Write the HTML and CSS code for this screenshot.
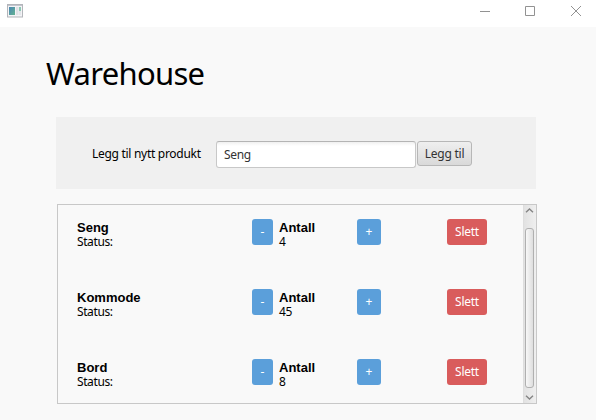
FILE: index.html
```html
<!DOCTYPE html>
<html lang="no">
<head>
<meta charset="utf-8">
<title>Warehouse</title>
<link rel="stylesheet" href="styles.css">
</head>
<body>
<header class="titlebar">
  <svg class="app-icon" width="16" height="14" viewBox="0 0 16 14">
    <defs><linearGradient id="pane" x1="0" y1="0" x2="1" y2="1"><stop offset="0" stop-color="#4a86b4"/><stop offset="1" stop-color="#64b391"/></linearGradient></defs>
    <rect x=".5" y=".5" width="15" height="12.5" fill="#f4f4f6" stroke="#b3b5ba"/>
    <path d="M1 1.5h14" stroke="#c3c5ce"/>
    <rect x="2" y="3" width="6" height="8" fill="url(#pane)"/>
    <rect x="9" y="3" width="2.5" height="8" fill="#e0e1e6"/>
    <rect x="12" y="3" width="2" height="4" fill="#8cc9b4"/>
    <rect x="12" y="7" width="2" height="4" fill="#e3e6ea"/>
  </svg>
  <div class="window-controls">
    <svg width="10" height="10" viewBox="0 0 10 10"><path d="M0 5.5h10"/></svg>
    <svg width="10" height="10" viewBox="0 0 10 10"><path d="M.5.5h9v9h-9z"/></svg>
    <svg width="10" height="10" viewBox="0 0 10 10"><path d="M0 0l10 10M10 0L0 10"/></svg>
  </div>
</header>
<main>
  <h1>Warehouse</h1>
  <form class="add-panel">
    <label for="product">Legg til nytt produkt</label>
    <input id="product" type="text" value="Seng">
    <button class="add" type="button">Legg til</button>
  </form>
  <section class="list">
    <div class="rows">
      <article class="row">
        <div class="info"><strong>Seng</strong><span>Status:</span></div>
        <button class="btn minus" type="button">-</button>
        <div class="count"><strong>Antall</strong><span>4</span></div>
        <button class="btn plus" type="button">+</button>
        <button class="btn delete" type="button">Slett</button>
      </article>
      <article class="row">
        <div class="info"><strong>Kommode</strong><span>Status:</span></div>
        <button class="btn minus" type="button">-</button>
        <div class="count"><strong>Antall</strong><span>45</span></div>
        <button class="btn plus" type="button">+</button>
        <button class="btn delete" type="button">Slett</button>
      </article>
      <article class="row">
        <div class="info"><strong>Bord</strong><span>Status:</span></div>
        <button class="btn minus" type="button">-</button>
        <div class="count"><strong>Antall</strong><span>8</span></div>
        <button class="btn plus" type="button">+</button>
        <button class="btn delete" type="button">Slett</button>
      </article>
    </div>
    <div class="scrollbar">
      <svg width="9" height="5" viewBox="0 0 9 5"><path d="M1 4.2L4.500 1 8 4.200"/></svg>
      <div class="thumb"></div>
      <svg width="9" height="5" viewBox="0 0 9 5"><path d="M1 .8L4.500 4 8 .8"/></svg>
    </div>
  </section>
</main>
</body>
</html>
```

FILE: styles.css
```css
* { box-sizing: border-box; }
body {
  margin: 0;
  width: 596px;
  height: 420px;
  overflow: hidden;
  background: #f9f9f9;
  color: #000;
  font: 12px/14px "Noto Sans", "Open Sans", sans-serif;
}
svg { display: block; fill: none; }
button, input { margin: 0; font: inherit; }
.titlebar {
  display: flex;
  justify-content: space-between;
  height: 27px;
  padding: 4px 15px 0 7px;
  background: #fff;
}
.window-controls {
  display: flex;
  gap: 35px;
  padding-top: 2px;
}
.window-controls svg { stroke: #929292; }
.window-controls svg:last-child { margin-left: 1px; }
main { padding: 24px 59px 0 56px; }
h1 {
  margin: 0 0 0 -10px;
  height: 66px;
  font-size: 31px;
  font-weight: 400;
  line-height: 44px;
  letter-spacing: -0.7px;
}
.add-panel {
  display: flex;
  align-items: flex-start;
  width: 480px;
  height: 72px;
  margin: 0 0 15px;
  padding: 24px 0 0 36px;
  background: #f0f0f0;
}
.add-panel label {
  width: 124px;
  padding-top: 6px;
  letter-spacing: -0.29px;
  white-space: nowrap;
}
.add-panel input {
  width: 200px;
  height: 27px;
  padding: 0 7px;
  border: 1px solid #c8c8c8;
  border-top-color: #b4b4b4;
  border-radius: 3px;
  background: linear-gradient(#f0f0f0, #fff 4px);
  color: #333;
  letter-spacing: -0.3px;
  outline: 0;
}
.add {
  width: 55px;
  height: 25px;
  margin-left: 1px;
  padding: 0;
  border: 1px solid #b7b7b7;
  border-radius: 3px;
  background: linear-gradient(#efefef, #d9d9d9);
  color: #333;
  letter-spacing: -0.25px;
}
.list {
  display: flex;
  width: 480px;
  height: 200px;
  margin-left: 1px;
  border: 1px solid #c8c8c8;
}
.rows { flex: 1; overflow: hidden; }
.row {
  display: grid;
  grid-template-columns: 175px 27px 78px 90px 40px;
  align-items: start;
  height: 70px;
  padding: 14px 0 0 19px;
}
.info, .count {
  display: flex;
  flex-direction: column;
  padding-top: 2px;
}
.info span, .count span { letter-spacing: -0.4px; }
strong {
  font: bold 13px/14px "Liberation Sans", Arial, sans-serif;
}
.btn {
  height: 26px;
  padding: 0;
  border: 0;
  border-radius: 3px;
  background: #5b9fda;
  color: #fff;
}
.minus { width: 21px; }
.plus { width: 24px; }
.delete { width: 40px; background: #d95c5c; letter-spacing: -0.25px; }
.scrollbar {
  display: flex;
  flex-direction: column;
  align-items: center;
  justify-content: space-between;
  width: 13px;
  padding: 3px 1px 3px 0;
  border-left: 1px solid #dedede;
  background: linear-gradient(90deg, #e2e2e2, #efefef);
}
.scrollbar svg { stroke: #858585; stroke-width: 1.4; }
.thumb {
  width: 9px;
  height: 160px;
  margin-top: 8px;
  border: 1px solid #b0b0b0;
  border-radius: 3px;
  background: linear-gradient(90deg, #f8f8f8, #dedede);
}
```
